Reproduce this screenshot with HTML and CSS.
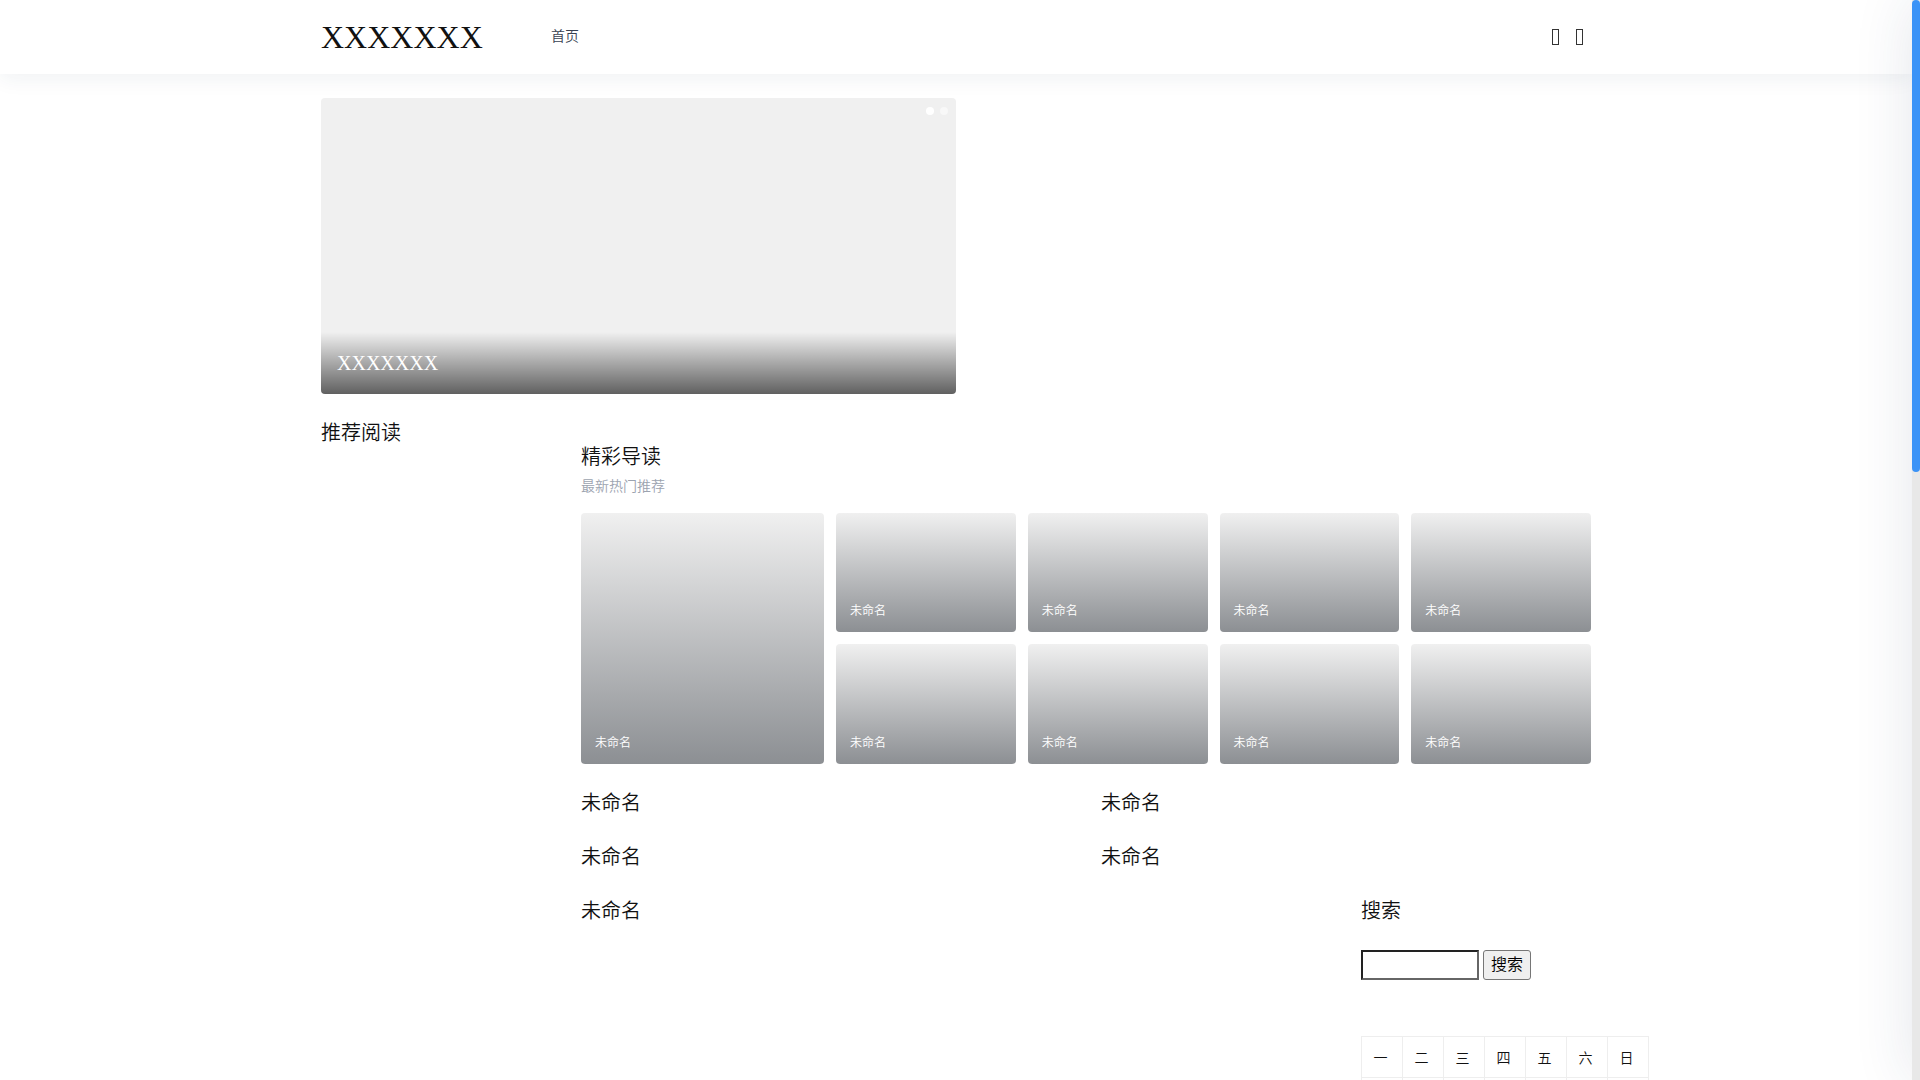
FILE: index.html
```html
<!DOCTYPE html>
<html lang="zh-CN">
<head>
	<meta charset="UTF-8">
	<title>XXXXXXX</title>
	<link rel="stylesheet" href="styles.css">
</head>

<body>
	<header class="header">
		<div class="header-inner">
			<a class="logo" href="#">XXXXXXX</a>
			<nav class="nav"><a href="#">首页</a></nav>
			<div class="tools">
				<span class="tool"></span>
				<span class="tool"></span>
			</div>
		</div>
	</header>

	<div class="wrap">
		<div class="hero">
			<div class="dots">
				<span class="dot on"></span>
				<span class="dot"></span>
			</div>
			<div class="hero-title">XXXXXXX</div>
		</div>

		<div class="columns">
			<aside class="side">
				<h3 class="title">推荐阅读</h3>
			</aside>

			<main class="main">
				<h3 class="title">精彩导读</h3>
				<p class="sub">最新热门推荐</p>

				<div class="cards">
					<a class="card big" href="#">未命名</a>
					<a class="card" href="#">未命名</a>
					<a class="card" href="#">未命名</a>
					<a class="card" href="#">未命名</a>
					<a class="card" href="#">未命名</a>
					<a class="card" href="#">未命名</a>
					<a class="card" href="#">未命名</a>
					<a class="card" href="#">未命名</a>
					<a class="card" href="#">未命名</a>
				</div>

				<div class="list">
					<h3 class="title item">未命名</h3>
					<h3 class="title item">未命名</h3>
					<h3 class="title item">未命名</h3>
					<h3 class="title item">未命名</h3>
				</div>

				<div class="bottom">
					<h3 class="title item">未命名</h3>
					<div class="widget">
						<h3 class="title">搜索</h3>
						<form class="search">
							<input class="search-input" type="text">
							<button class="search-btn" type="button">搜索</button>
						</form>
						<table class="calendar">
							<thead>
								<tr><th>一</th><th>二</th><th>三</th><th>四</th><th>五</th><th>六</th><th>日</th></tr>
							</thead>
							<tbody>
								<tr><td></td><td></td><td></td><td></td><td></td><td></td><td></td></tr>
							</tbody>
						</table>
					</div>
				</div>
			</main>
		</div>
	</div>

	<div class="edge"></div>
	<div class="rail"><div class="thumb"></div></div>
</body>

</html>
```

FILE: styles.css
```css
html {
	overflow: hidden;
}
body {
	margin: 0;
	height: 1080px;
	overflow: hidden;
	padding-right: 8px;
	background: #fff;
	color: #111;
	font-family: "Liberation Serif", "Noto Sans CJK SC", serif;
	font-weight: 350;
}
a {
	color: inherit;
	text-decoration: none;
}

/*滚动条*/
.rail {
	position: fixed;
	top: 0;
	right: 0;
	bottom: 0;
	width: 8px;
	background: #e8e8e8;
}
.thumb {
	height: 472px;
	border-radius: 4px;
	background: #3b93f7;
}

/*顶部*/
.header {
	height: 74px;
	background: #fff;
	box-shadow: 0 4px 20px rgba(30, 50, 90, .07);
}
.header-inner {
	width: 1270px;
	height: 100%;
	margin: 0 auto;
	display: flex;
	align-items: center;
}
.logo {
	width: 230px;
	font-size: 32px;
}
.nav {
	flex: 1;
	font-size: 14px;
	color: #374151;
	padding-bottom: 4px;
}
.tools {
	display: flex;
	gap: 17px;
	padding-right: 8px;
}
.tool {
	width: 7px;
	height: 16px;
	box-sizing: border-box;
	border: 1px solid #333;
}

.wrap {
	width: 1270px;
	margin: 0 auto;
	padding-top: 24px;
}

/*轮播*/
.hero {
	position: relative;
	width: 635px;
	height: 296px;
	border-radius: 4px;
	overflow: hidden;
	background: #f0f0f0;
}
.dots {
	position: absolute;
	top: 9px;
	right: 8px;
	display: flex;
	gap: 6px;
}
.dot {
	width: 8px;
	height: 8px;
	border-radius: 50%;
	background: rgba(255, 255, 255, .5);
}
.dot.on {
	background: #fff;
}
.hero-title {
	position: absolute;
	left: 0;
	right: 0;
	bottom: 0;
	height: 62px;
	box-sizing: border-box;
	padding: 18px 16px 0;
	font-size: 20px;
	line-height: 26px;
	color: #fff;
	background: linear-gradient(rgba(0, 0, 0, 0), rgba(0, 0, 0, .6));
}

/*内容*/
.columns {
	display: flex;
	margin-top: 24px;
}
.side {
	width: 260px;
	flex: none;
}
.main {
	width: 1010px;
	padding-top: 24px;
}
.title {
	margin: 0;
	font-size: 20px;
	font-weight: 350;
	line-height: 30px;
}
.sub {
	margin: 4px 0 0;
	font-size: 14px;
	line-height: 22px;
	color: #9ca3af;
}

.cards {
	display: grid;
	grid-template-columns: 243px repeat(4, 1fr);
	grid-template-rows: 119px 120px;
	gap: 12px;
	margin: 15px 0 24px;
}
.card {
	display: flex;
	align-items: flex-end;
	padding: 0 14px 13px;
	border-radius: 4px;
	font-size: 12px;
	line-height: 16px;
	color: #fff;
	background: linear-gradient(#f0f0f0, #8c8f93);
}
.big {
	grid-row: span 2;
}

.list {
	display: grid;
	grid-template-columns: 520px 520px;
}
.item {
	margin-bottom: 24px;
}
.bottom {
	display: flex;
}
.bottom .item {
	width: 780px;
	flex: none;
}
.widget {
	width: 288px;
	flex: none;
}

.search {
	display: flex;
	gap: 4px;
	margin-top: 24px;
}
.search-input {
	width: 118px;
	height: 30px;
	box-sizing: border-box;
	padding: 0;
	border-width: 2px;
	border-style: solid;
	border-color: #222 #666 #666 #222;
	background: #fff;
}
.search-btn {
	width: 48px;
	height: 30px;
	padding: 0 0 4px;
	border: 1px solid #767676;
	border-radius: 3px;
	background: #efefef;
	color: #000;
	font-size: 16px;
	font-family: inherit;
	font-weight: 350;
}

.calendar {
	width: 288px;
	margin-top: 56px;
	border-collapse: collapse;
	table-layout: fixed;
	font-size: 14px;
}
.calendar th,
.calendar td {
	height: 40px;
	padding: 0 3px 0 0;
	border: 1px solid #eee;
	font-weight: 350;
	text-align: center;
}

/*右侧阴影，盒子本身藏在屏幕外*/
.edge {
	position: fixed;
	top: 0;
	right: -92px;
	bottom: 0;
	width: 100px;
	box-shadow: 0 0 60px rgba(30, 50, 90, .12);
}
```
